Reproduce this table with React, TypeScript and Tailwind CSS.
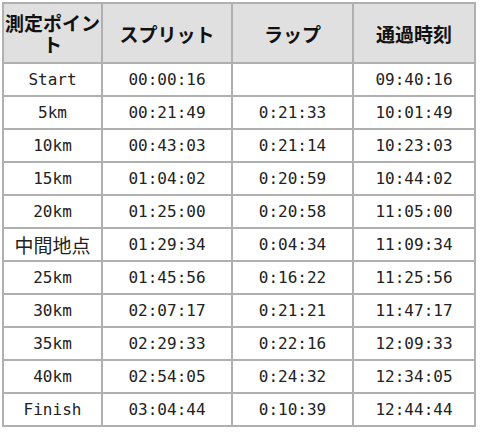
const rows: [string, string, string, string][] = [
  ["Start", "00:00:16", "", "09:40:16"],
  ["5km", "00:21:49", "0:21:33", "10:01:49"],
  ["10km", "00:43:03", "0:21:14", "10:23:03"],
  ["15km", "01:04:02", "0:20:59", "10:44:02"],
  ["20km", "01:25:00", "0:20:58", "11:05:00"],
  ["中間地点", "01:29:34", "0:04:34", "11:09:34"],
  ["25km", "01:45:56", "0:16:22", "11:25:56"],
  ["30km", "02:07:17", "0:21:21", "11:47:17"],
  ["35km", "02:29:33", "0:22:16", "12:09:33"],
  ["40km", "02:54:05", "0:24:32", "12:34:05"],
  ["Finish", "03:04:44", "0:10:39", "12:44:44"],
];

const headers = ["測定ポイント", "スプリット", "ラップ", "通過時刻"];

// Latin is half-width, kanji full-width (about 19px)
const isCjk = (s: string) => /[\u3000-\u9fff]/.test(s);

export default function App() {
  return (
    <div className="w-[480px] h-[434px] bg-white pl-[2px] pt-[2px]">
      <table className="table-fixed border-collapse w-[472px] text-[#222]">
        <colgroup>
          <col className="w-[99px]" />
          <col className="w-[130px]" />
          <col className="w-[121px]" />
          <col className="w-[122px]" />
        </colgroup>
        <thead>
          <tr className="h-[60px] bg-[#e0e0e0]">
            {headers.map((h) => (
              <th
                key={h}
                className="border-2 border-[#b0b0b0] px-0 text-center align-middle text-[19px] leading-[21px] font-bold text-[#111] [font-family:'Noto_Sans_CJK_JP',sans-serif]"
              >
                {h}
              </th>
            ))}
          </tr>
        </thead>
        <tbody>
          {rows.map((r) => (
            <tr key={r[0]} className="h-[33px]">
              {r.map((c, i) => (
                <td
                  key={i}
                  className={
                    isCjk(c)
                      ? "border-2 border-[#b0b0b0] p-0 text-center align-middle text-[19px] leading-[20px] [font-family:'Noto_Sans_CJK_JP',sans-serif]"
                      : "border-2 border-[#b0b0b0] p-0 text-center align-middle text-[16px] leading-[20px] [font-family:'DejaVu_Sans_Mono',monospace]"
                  }
                >
                  {c}
                </td>
              ))}
            </tr>
          ))}
        </tbody>
      </table>
    </div>
  );
}
